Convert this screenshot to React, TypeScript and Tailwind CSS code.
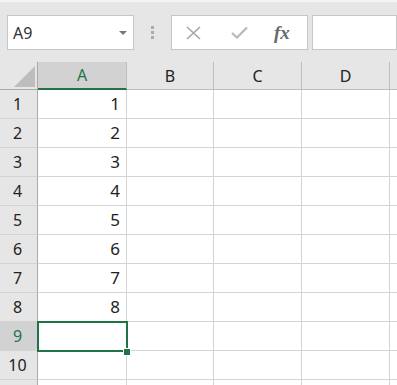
import React from 'react';

const cols = [
  { label: 'A', w: 'w-[89px]' },
  { label: 'B', w: 'w-[87px]' },
  { label: 'C', w: 'w-[88px]' },
  { label: 'D', w: 'w-[88px]' },
  { label: '', w: 'w-[60px]' },
];

const rows = [1, 2, 3, 4, 5, 6, 7, 8, 9, 10, 11];

export default function App() {
  return (
    <div
      className="relative w-[397px] h-[385px] overflow-hidden bg-[#e6e6e6] text-[#222]"
      style={{ fontFamily: '"Noto Sans", "Open Sans", sans-serif' }}
    >
      {/* toolbar */}
      <div className="h-[2px] bg-[#f3f3f3]" />
      <div className="h-[60px] flex items-start pt-[13px]">
        <div className="ml-[7px] w-[127px] h-[35px] bg-white border border-[#c6c6c6] flex items-center justify-between pl-[5px] pr-[6px]">
          <span className="text-[16px] text-[#333] leading-none">A9</span>
          <svg width="8" height="4" viewBox="0 0 8 4">
            <path d="M0 0h8L4 4z" fill="#777" />
          </svg>
        </div>
        <div className="ml-[17px] mt-[11px] flex flex-col gap-[2px]">
          <div className="w-[3px] h-[3px] bg-[#ababab]" />
          <div className="w-[3px] h-[3px] bg-[#ababab]" />
          <div className="w-[3px] h-[3px] bg-[#ababab]" />
        </div>
        <div className="ml-[17px] w-[137px] h-[35px] bg-white border border-[#c6c6c6] flex items-center">
          <svg className="ml-[14px]" width="15" height="14" viewBox="0 0 15 14">
            <path d="M1 1L14 13M14 1L1 13" stroke="#a6a6a6" strokeWidth="1.6" />
          </svg>
          <svg className="ml-[30px]" width="17" height="13" viewBox="0 0 17 13">
            <path d="M1 7L6 11.5L16 1.5" stroke="#b8b8b8" strokeWidth="2.2" fill="none" />
          </svg>
          <span
            className="ml-[26px] text-[19px] font-bold italic text-[#6a6a6a] leading-none"
            style={{ fontFamily: '"Liberation Serif", "DejaVu Serif", serif' }}
          >
            fx
          </span>
        </div>
        <div className="ml-[4px] flex-1 h-[35px] bg-white border border-[#c6c6c6]" />
      </div>

      {/* header row */}
      <div className="flex h-[28px]">
        <div className="w-[38px] shrink-0 h-[28px] border-r border-b border-[#a9a9a9] flex items-end justify-end pr-[2px] pb-[2px]">
          <svg width="21" height="21" viewBox="0 0 21 21">
            <path d="M21 0V21H0z" fill="#bdbdbd" />
          </svg>
        </div>
        {cols.map((c, i) => (
          <div
            key={i}
            className={`${c.w} shrink-0 h-[28px] flex items-center justify-center text-[16px] ${
              i === 0
                ? 'bg-[#d2d2d2] text-[#217346] border-r border-[#bdbdbd] border-b-2 border-b-[#217346]'
                : 'border-r border-b border-[#bdbdbd]'
            }`}
          >
            {c.label}
          </div>
        ))}
      </div>

      {/* grid rows */}
      {rows.map((r) => (
        <div key={r} className="flex h-[29px]">
          <div
            className={`w-[38px] shrink-0 h-[29px] border-r border-r-[#a9a9a9] border-b border-b-[#d4d4d4] flex items-center justify-center pr-[2px] text-[16px] ${
              r === 9 ? 'bg-[#d2d2d2] text-[#217346]' : ''
            }`}
          >
            {r <= 10 ? r : ''}
          </div>
          {cols.map((c, i) => (
            <div
              key={i}
              className={`${c.w} shrink-0 h-[29px] bg-white border-r border-b border-[#d4d4d4] flex items-center justify-end pr-[6px] text-[17px]`}
            >
              {i === 0 && r <= 8 ? r : ''}
            </div>
          ))}
        </div>
      ))}

      {/* selection */}
      <div className="absolute left-[37px] top-[321px] w-[91px] h-[31px] border-2 border-[#217346]" />
      <div className="absolute left-[124px] top-[349px] w-[6px] h-[6px] bg-[#217346] outline outline-1 outline-white" />
    </div>
  );
}
